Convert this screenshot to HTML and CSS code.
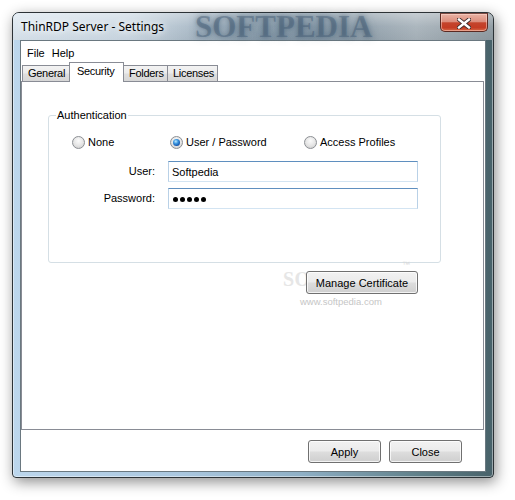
FILE: index.html
```html
<!DOCTYPE html>
<html>
<head>
<meta charset="utf-8">
<link rel="stylesheet" href="styles.css">
</head>
<body>
<div class="window">
  <div class="titlebar">
    <span class="title">ThinRDP Server - Settings</span>
    <span class="wm-title">SOFTPEDIA</span>
    <div class="close-btn">
      <svg width="14" height="11" viewBox="0 0 14 11">
        <path d="M2 1.5 L12 9.5 M12 1.5 L2 9.5" stroke="#3a2a2a" stroke-width="4.2" stroke-linecap="square"/>
        <path d="M2 1.5 L12 9.5 M12 1.5 L2 9.5" stroke="#ffffff" stroke-width="2.4" stroke-linecap="square"/>
      </svg>
    </div>
  </div>
  <div class="client">
    <div class="menubar"><span class="menu-item">File</span><span class="menu-item">Help</span></div>
    <div class="tabs">
      <span class="tab t-general">General</span>
      <span class="tab t-security active">Security</span>
      <span class="tab t-folders">Folders</span>
      <span class="tab t-licenses">Licenses</span>
    </div>
    <div class="panel">
      <fieldset class="group">
        <legend>Authentication</legend>
        <div class="radios">
          <label class="opt"><span class="radio"></span>None</label>
          <label class="opt"><span class="radio checked"></span>User / Password</label>
          <label class="opt"><span class="radio"></span>Access Profiles</label>
        </div>
        <div class="field-row">
          <span class="lbl">User:</span>
          <span class="input">Softpedia</span>
        </div>
        <div class="field-row">
          <span class="lbl">Password:</span>
          <span class="input pwd"><i></i><i></i><i></i><i></i><i></i></span>
        </div>
      </fieldset>
      <div class="cert-row"><span class="btn btn-cert">Manage Certificate</span></div>
      <span class="wm-logo">SO</span>
      <span class="wm-tm">™</span>
      <span class="wm-url">www.softpedia.com</span>
    </div>
    <div class="bottom">
      <span class="btn btn-foot">Apply</span>
      <span class="btn btn-foot">Close</span>
    </div>
  </div>
</div>
</body>
</html>
```

FILE: styles.css
```css
html, body {
  margin: 0;
  padding: 0;
  background: #ffffff;
}
body {
  width: 515px;
  height: 500px;
  overflow: hidden;
  font-family: "Liberation Sans", Arial, sans-serif;
  font-size: 11px;
  color: #000;
}
.window {
  box-sizing: border-box;
  margin: 12px 0 0 12px;
  width: 482px;
  height: 466px;
  border: 1px solid #2c3236;
  border-radius: 7px 7px 4px 4px;
  background: linear-gradient(90deg, #bcd6ec 0%, #aac7df 35%, #8fb0c6 60%, #5f7f88 85%, #48626a 100%);
  box-shadow: 2px 4px 14px rgba(0,0,0,0.45), inset 0 0 0 1px rgba(255,255,255,0.45);
  padding: 0 7px 5px 7px;
  display: flex;
  flex-direction: column;
  position: relative;
}
.titlebar {
  height: 27px;
  margin: 0 -7px;
  padding-left: 8px;
  border-radius: 6px 6px 0 0;
  background:
    linear-gradient(180deg, rgba(255,255,255,0.35) 0%, rgba(255,255,255,0.05) 50%, rgba(0,0,0,0.03) 100%),
    linear-gradient(90deg, #dae5ee 0%, #cbd8e3 25%, #a9b9c6 38%, #8a9dac 50%, #8699a8 62%, #94a3ae 74%, #a8b3bb 84%, #8f9ba2 100%);
  position: relative;
  display: flex;
  align-items: center;
}
.title {
  font-family: "Noto Sans", "Open Sans", sans-serif;
  font-size: 12px;
  line-height: 27px;
  color: #000;
  text-shadow: 0 0 6px #fff, 0 0 10px rgba(255,255,255,0.9);
  position: relative;
  z-index: 2;
}
.wm-title {
  position: absolute;
  left: 182px;
  top: 0;
  font-family: "Liberation Serif", serif;
  font-weight: bold;
  font-size: 31px;
  line-height: 27px;
  color: rgba(65, 90, 115, 0.45);
  text-shadow: 0 0 4px rgba(60,85,110,0.5), 0 0 10px rgba(60,85,110,0.3);
}
.close-btn {
  position: absolute;
  left: 427px;
  top: 0;
  width: 48px;
  height: 19px;
  box-sizing: border-box;
  border: 1px solid #5b2a22;
  border-top-color: #7b4a42;
  border-radius: 0 0 5px 5px;
  background:
    linear-gradient(180deg, #eab3a5 0%, #dc8d7c 45%, #c4442c 52%, #c43c24 80%, #d66a48 100%);
  box-shadow: inset 0 0 0 1px rgba(255,220,210,0.5);
  display: flex;
  align-items: center;
  justify-content: center;
  z-index: 3;
}
.close-btn svg { display: block; margin-top: 1px; }

.client {
  flex: 1;
  background: #ffffff;
  border: 1px solid #6a7880;
  display: flex;
  flex-direction: column;
}
.menubar {
  box-sizing: border-box;
  height: 21px;
  padding: 4px 0 0 6px;
  line-height: 17px;
  display: flex;
  gap: 7px;
}
.tabs {
  height: 19px;
  display: flex;
  align-items: flex-end;
  padding-left: 1px;
  position: relative;
  z-index: 2;
}
.tab {
  box-sizing: border-box;
  height: 16px;
  line-height: 15px;
  border: 1px solid #898c95;
  border-bottom: none;
  background: linear-gradient(180deg, #f3f3f3 0%, #ebebeb 45%, #dedede 55%, #d6d6d6 100%);
  padding-left: 5px;
  margin-left: -1px;
  white-space: nowrap;
  letter-spacing: -0.3px;
}
.tab:first-child { margin-left: 0; }
.t-general { width: 48px; }
.t-security { width: 55px; }
.t-folders { width: 45px; }
.t-licenses { width: 51px; }
.tab.active {
  height: 20px;
  margin-bottom: -1px;
  background: #ffffff;
  padding-top: 1px;
  padding-left: 7px;
  position: relative;
  z-index: 3;
}
.panel {
  box-sizing: border-box;
  height: 349px;
  border: 1px solid #898c95;
  margin-right: 1px;
  position: relative;
}
.group {
  box-sizing: border-box;
  width: 393px;
  height: 154px;
  margin: 27px 0 0 26px;
  padding: 0;
  border: 1px solid #d5dfe5;
  border-radius: 3px;
  min-width: 0;
}
.group legend {
  padding: 0 1px;
  margin-left: 7px;
  line-height: 13px;
}
.radios {
  display: grid;
  grid-template-columns: 98px 134px auto;
  margin: 13px 0 0 23px;
  height: 14px;
}
.opt {
  display: flex;
  align-items: center;
  gap: 3px;
  line-height: 14px;
}
.radio {
  box-sizing: border-box;
  width: 13px;
  height: 13px;
  border-radius: 50%;
  border: 1px solid #8c8f94;
  background: radial-gradient(circle at 50% 35%, #fbfbfb 0%, #e4e4e4 55%, #c8c8c8 100%);
  position: relative;
}
.radio.checked::after {
  content: "";
  position: absolute;
  left: 2px;
  top: 2px;
  width: 7px;
  height: 7px;
  border-radius: 50%;
  background: radial-gradient(circle at 40% 35%, #bfeaff 0%, #3d98e0 35%, #1457b0 70%, #0a2f70 100%);
}
.field-row {
  display: grid;
  grid-template-columns: 106px 250px;
  column-gap: 13px;
  align-items: center;
  margin-top: 6px;
}
.radios + .field-row { margin-top: 12px; }
.lbl {
  text-align: right;
  line-height: 17px;
}
.input {
  box-sizing: border-box;
  height: 21px;
  border: 1px solid #b9d1e7;
  border-top-color: #5f8fbf;
  border-bottom-color: #d3e4f2;
  padding: 1px 3px 0 3px;
  line-height: 17px;
  display: flex;
  align-items: center;
}
.pwd { gap: 2px; padding-left: 4px; }
.pwd i {
  width: 5px;
  height: 5px;
  border-radius: 50%;
  background: #000;
}
.cert-row {
  width: 393px;
  margin: 8px 0 0 26px;
  box-sizing: border-box;
  padding-right: 23px;
  display: flex;
  justify-content: flex-end;
  position: relative;
  z-index: 2;
}
.btn {
  box-sizing: border-box;
  height: 23px;
  border: 1px solid #707070;
  border-radius: 3px;
  background: linear-gradient(180deg, #f2f2f2 0%, #ebebeb 48%, #dddddd 52%, #cfcfcf 100%);
  box-shadow: inset 0 0 0 1px rgba(255,255,255,0.75);
  display: flex;
  align-items: center;
  justify-content: center;
  line-height: 14px;
  padding-top: 1px;
}
.btn-cert { width: 112px; }
.wm-logo {
  position: absolute;
  left: 261px;
  top: 186px;
  font-family: "Liberation Serif", serif;
  font-weight: bold;
  font-size: 20px;
  line-height: 22px;
  color: #e6e6e6;
  letter-spacing: 0.5px;
  z-index: 1;
}
.wm-tm {
  position: absolute;
  left: 380px;
  top: 178px;
  font-size: 8px;
  line-height: 9px;
  color: #d8d8d8;
  z-index: 1;
}
.wm-url {
  position: absolute;
  left: 278px;
  top: 214px;
  font-size: 9.5px;
  color: #c6c6c6;
  z-index: 1;
}
.bottom {
  flex: 1;
  display: flex;
  justify-content: flex-end;
  align-items: flex-start;
  gap: 8px;
  padding: 10px 23px 0 0;
}
.btn-foot { width: 73px; }
```
